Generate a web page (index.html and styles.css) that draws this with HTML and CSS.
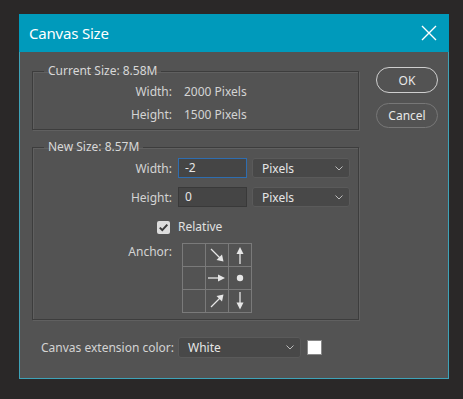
FILE: index.html
```html
<!DOCTYPE html>
<html>
<head>
<meta charset="utf-8">
<link rel="stylesheet" href="styles.css">
</head>
<body>
<div class="dialog">
  <div class="titlebar">
    <span class="title">Canvas Size</span>
    <svg class="close" width="16" height="16" viewBox="0 0 16 16"><path d="M1 1L15 15M15 1L1 15" stroke="#fff" stroke-width="1.4" fill="none"/></svg>
  </div>
  <div class="body">
    <div class="main">
      <fieldset class="group g1">
        <legend>Current Size: 8.58M</legend>
        <div class="info">
          <span class="lbl">Width:</span><span class="val">2000 Pixels</span>
          <span class="lbl">Height:</span><span class="val">1500 Pixels</span>
        </div>
      </fieldset>
      <fieldset class="group g2">
        <legend>New Size: 8.57M</legend>
        <div class="form">
          <span class="lbl">Width:</span>
          <div class="input focus">-2</div>
          <div class="select sel-unit"><span>Pixels</span><svg class="chev" width="8" height="5" viewBox="0 0 8 5"><path d="M0.5 0.5L4 4L7.5 0.5" stroke="#bbb" fill="none"/></svg></div>
          <span class="lbl">Height:</span>
          <div class="input">0</div>
          <div class="select sel-unit"><span>Pixels</span><svg class="chev" width="8" height="5" viewBox="0 0 8 5"><path d="M0.5 0.5L4 4L7.5 0.5" stroke="#bbb" fill="none"/></svg></div>
          <span class="lbl"><span class="check"><svg width="13" height="13" viewBox="0 0 13 13"><path d="M2.8 6.6L5.3 9.1L10.3 3.6" stroke="#3a3a3a" stroke-width="2" fill="none"/></svg></span></span>
          <span class="rel">Relative</span>
          <span class="lbl anchor-lbl">Anchor:</span>
          <div class="anchor">
            <div class="cell"></div>
            <div class="cell"><svg width="22" height="22" viewBox="0 0 22 22"><path d="M5 5L15 15" stroke="#e6e6e6" stroke-width="1.3"/><path d="M17.5 17.5L10.5 16L16 10.5Z" fill="#e6e6e6"/></svg></div>
            <div class="cell"><svg width="22" height="22" viewBox="0 0 22 22"><path d="M11 9V20" stroke="#e6e6e6" stroke-width="1.3"/><path d="M11 3L7.5 10H14.5Z" fill="#e6e6e6"/></svg></div>
            <div class="cell"></div>
            <div class="cell"><svg width="22" height="22" viewBox="0 0 22 22"><path d="M2 11H13" stroke="#e6e6e6" stroke-width="1.3"/><path d="M19 11L12 7.5V14.5Z" fill="#e6e6e6"/></svg></div>
            <div class="cell"><svg width="22" height="22" viewBox="0 0 22 22"><circle cx="11" cy="11" r="3.2" fill="#e6e6e6"/></svg></div>
            <div class="cell"></div>
            <div class="cell"><svg width="22" height="22" viewBox="0 0 22 22"><path d="M5 17L15 7" stroke="#e6e6e6" stroke-width="1.3"/><path d="M17.5 4.5L16 11.5L10.5 6Z" fill="#e6e6e6"/></svg></div>
            <div class="cell"><svg width="22" height="22" viewBox="0 0 22 22"><path d="M11 2V13" stroke="#e6e6e6" stroke-width="1.3"/><path d="M11 19.5L7.5 12.5H14.5Z" fill="#e6e6e6"/></svg></div>
          </div>
        </div>
      </fieldset>
      <div class="ext">
        <span class="ext-lbl">Canvas extension color:</span>
        <div class="select sel-color"><span>White</span><svg class="chev" width="8" height="5" viewBox="0 0 8 5"><path d="M0.5 0.5L4 4L7.5 0.5" stroke="#bbb" fill="none"/></svg></div>
        <div class="swatch"></div>
      </div>
    </div>
    <div class="buttons">
      <div class="btn ok">OK</div>
      <div class="btn cancel">Cancel</div>
    </div>
  </div>
</div>
</body>
</html>
```
FILE: styles.css
```css
html, body {
  margin: 0;
  padding: 0;
  background: #2a2828;
  width: 463px;
  height: 399px;
  overflow: hidden;
  font-family: "Noto Sans", "Open Sans", sans-serif;
  color: #d4d4d4;
}
body {
  padding: 14px 0 0 19px;
  box-sizing: border-box;
}
.dialog {
  width: 430px;
  height: 365px;
  box-sizing: border-box;
  border: 1px solid #3ea3b8;
  border-top: none;
  background: #535353;
  display: flex;
  flex-direction: column;
}
.titlebar {
  height: 38px;
  margin: 0 -1px;
  background: #009abb;
  display: flex;
  align-items: center;
  justify-content: space-between;
  padding: 0 12px 0 10px;
}
.title {
  color: #fff;
  font-size: 15px;
  letter-spacing: -0.2px;
}
.close {
  display: block;
}
.body {
  display: flex;
  padding: 11px 10px 0 12px;
  gap: 17px;
}
.main {
  width: 327px;
}
.group {
  margin: 0;
  padding: 0;
  border: 1px solid #3d3d3d;
  box-shadow: 1px 1px 0 #606060, inset 1px 1px 0 #606060;
  min-width: 0;
}
.group legend {
  font-size: 12px;
  line-height: 16px;
  padding: 0 4px;
  margin-left: 11px;
  color: #d8d8d8;
}
.info {
  display: grid;
  grid-template-columns: 139px auto;
  column-gap: 12px;
  grid-auto-rows: 23px;
  align-items: center;
  font-size: 12px;
  padding: 1px 0 3px;
}
.lbl {
  grid-column: 1;
  text-align: right;
  font-size: 12px;
}
.g2 {
  margin-top: 9px;
}
.form {
  display: grid;
  grid-template-columns: 139px 70px 98px;
  grid-template-rows: 20px 20px 20px 70px;
  column-gap: 5px;
  row-gap: 9px;
  align-items: center;
  font-size: 12px;
  padding: 3px 0 4px;
}
.form > .input { margin-left: 1px; }
.input {
  height: 20px;
  box-sizing: border-box;
  background: #454545;
  border: 1px solid #393939;
  padding: 0 6px;
  line-height: 18px;
  color: #e6e6e6;
  font-size: 12px;
}
.input.focus {
  border-color: #2e6db0;
}
.select {
  height: 20px;
  box-sizing: border-box;
  background: #484848;
  border: 1px solid #5a5a5a;
  border-radius: 3px;
  display: flex;
  align-items: center;
  justify-content: space-between;
  padding: 0 6px 0 9px;
  color: #e6e6e6;
  font-size: 12px;
}
.chev { display: block; }
.check {
  display: inline-block;
  width: 13px;
  height: 13px;
  background: #dcdcdc;
  border-radius: 2px;
  margin-right: 2px;
  vertical-align: middle;
}
.check svg { display: block; }
.rel {
  grid-column: 2 / span 2;
  margin-left: 1px;
  color: #e0e0e0;
}
.anchor-lbl {
  align-self: start;
  margin-top: -2px;
}
.anchor {
  grid-column: 2 / span 2;
  display: grid;
  grid-template-columns: repeat(3, 22px);
  grid-template-rows: repeat(3, 22px);
  gap: 1px;
  background: #7a7a7a;
  border: 1px solid #7a7a7a;
  width: max-content;
  height: 70px;
  box-sizing: border-box;
  margin-left: 5px;
  margin-top: -2px;
  align-self: start;
}
.cell {
  background: #535353;
  width: 22px;
  height: 22px;
}
.cell svg { display: block; }
.ext {
  display: flex;
  align-items: center;
  margin-top: 17px;
  padding-left: 9px;
  font-size: 12px;
}
.ext-lbl {
  width: 137px;
  color: #d4d4d4;
}
.sel-color {
  width: 123px;
  height: 21px;
}
.swatch {
  width: 15px;
  height: 15px;
  margin-left: 6px;
  background: #fff;
  border: 1px solid #888;
  box-sizing: border-box;
}
.buttons {
  display: flex;
  flex-direction: column;
  gap: 10px;
  padding-top: 4px;
}
.btn {
  width: 62px;
  height: 26px;
  box-sizing: border-box;
  border-radius: 13px;
  display: flex;
  align-items: center;
  justify-content: center;
  font-size: 12px;
  color: #e8e8e8;
}
.ok {
  border: 1px solid #cfcfcf;
}
.cancel {
  border: 1px solid #777;
  height: 25px;
}
```
